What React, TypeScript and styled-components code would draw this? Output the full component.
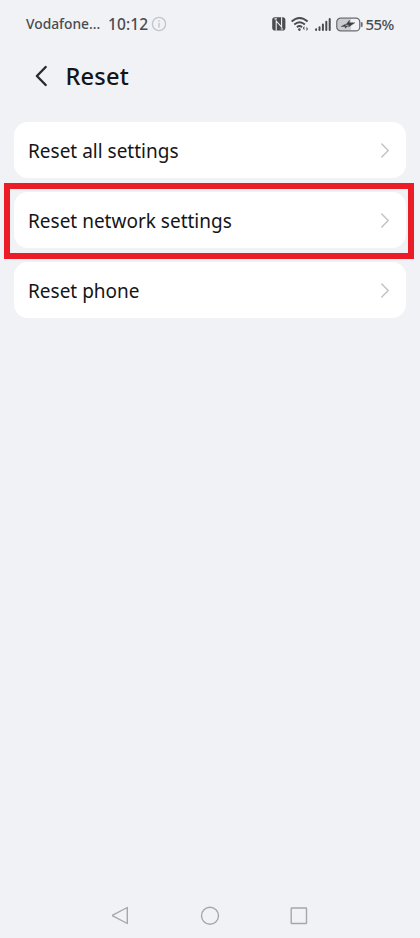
import React from "react";
import styled, { createGlobalStyle } from "styled-components";

const GlobalStyle = createGlobalStyle`
  html, body { margin: 0; padding: 0; background: #f1f2f6; }
  * { box-sizing: border-box; }
  svg { display: block; flex: none; }
`;

const Screen = styled.div`
  display: flex;
  flex-direction: column;
  width: 420px;
  height: 938px;
  background: #f1f2f6;
  color: #151517;
  font-family: "Noto Sans", "Open Sans", sans-serif;
  overflow: hidden;
`;

const StatusBar = styled.header`
  display: flex;
  align-items: center;
  justify-content: space-between;
  height: 48px;
  padding: 0 26px;
  color: #4a4b4f;
`;

const StatusGroup = styled.div`
  display: flex;
  align-items: center;
`;

const StatusText = styled.span<{ $size: number; $width: number; $spacing?: number; $gap?: number }>`
  width: ${(p) => p.$width}px;
  margin-right: ${(p) => p.$gap ?? 0}px;
  font-size: ${(p) => p.$size}px;
  font-weight: 500;
  line-height: 20px;
  letter-spacing: ${(p) => p.$spacing ?? 0}px;
  white-space: nowrap;
`;

const StatusIcons = styled.div`
  display: flex;
  align-items: center;
  gap: 4.5px;
  margin-right: 3px;
`;

const TitleBar = styled.div`
  display: flex;
  align-items: center;
  height: 56px;
  padding-left: 34px;
  gap: 15.5px;
`;

const Title = styled.h1`
  margin: 0;
  font-size: 23.6px;
  font-weight: 500;
  line-height: 32px;
  letter-spacing: 0.2px;
`;

const List = styled.main`
  display: flex;
  flex-direction: column;
  flex: 1;
  gap: 14px;
  padding: 18.4px 14px 0;
`;

const Row = styled.div`
  position: relative;
  display: flex;
  align-items: center;
  justify-content: space-between;
  height: 56px;
  padding: 0 16px 0 14px;
  border-radius: 14px;
  background: #fff;
`;

const RowLabel = styled.span`
  font-size: 19px;
  line-height: 26px;
  padding-top: 1px;
  white-space: nowrap;
`;

const Highlight = styled.div`
  position: absolute;
  inset: -9.4px -7.5px -10.4px -9.6px;
  border: 6px solid #ec1c26;
`;

const NavBar = styled.nav`
  display: flex;
  align-items: center;
  justify-content: space-between;
  height: 45px;
  padding: 0 111px 0 110px;
`;

const rows = [
  { label: "Reset all settings" },
  { label: "Reset network settings", highlighted: true },
  { label: "Reset phone" },
];

const InfoIcon = () => (
  <svg width="16" height="16" viewBox="0 0 16 16" fill="none" stroke="#c3c4c8" strokeWidth="1.3">
    <circle cx="8" cy="8" r="6.6" />
    <path d="M8 7v4.5M8 4.2v1.5" strokeWidth="1.4" />
  </svg>
);

const NfcIcon = () => (
  <svg width="14" height="14" viewBox="0 0 14 14" fill="none">
    <rect x="0.2" y="0.2" width="13.2" height="13.4" rx="2.8" fill="#4a4b4f" />
    <path d="M4.2 13.6V4L9.6 10V0.2M2.5 1.9h2.4M8.7 12h2.4" stroke="#f1f2f6" strokeWidth="1.1" />
  </svg>
);

const WifiIcon = () => (
  <svg width="20" height="16" viewBox="0 0 20 16" fill="none" stroke="#4a4b4f" strokeWidth="1.9">
    <path d="M.6 5.5Q8.6-1.7 16.6 5.5M3.3 8.5Q8.6 4 13.9 8.5M5.9 11.2Q8.6 9 11 11.2" />
    <circle cx="8.4" cy="13.6" r="1.3" fill="#4a4b4f" stroke="none" />
    <path d="m11.7 12.1 1.7-2v4.4ZM17.1 13.1l-1.7 2v-4.4Z" fill="#55565a" stroke="none" />
  </svg>
);

const SignalIcon = () => (
  <svg width="16" height="15" viewBox="0 0 16 15" stroke="#4a4b4f" strokeWidth="2" strokeLinecap="round">
    <path d="M1.1 12.3v.8M4.5 10.3v2.8M7.9 7.6v5.5M11.3 4.7v8.4M14.7 1.9v11.2" />
  </svg>
);

const BatteryIcon = () => (
  <svg width="27" height="15" viewBox="0 0 27 15" fill="none">
    <path d="M4.5 2H15v11H4.5Q1.5 13 1.5 10V5Q1.5 2 4.5 2Z" fill="#cbccd0" />
    <rect x="0.8" y="1.1" width="23" height="12.8" rx="4" stroke="#68696d" strokeWidth="1.3" />
    <path d="M25.8 5.3v4.4" stroke="#68696d" strokeWidth="1.6" />
    <path d="M13.4 3.2v2.6h5.4l-6.2 4.1V7.7H9.9ZM9.4 7.2v1.7h2.4l-2.6 2.4V9.5H5.1Z" fill="#3f4044" stroke="#3f4044" strokeWidth="0.4" />
  </svg>
);

const BackIcon = () => (
  <svg width="16" height="24" viewBox="0 0 16 24" fill="none" stroke="#29292e" strokeWidth="2.4" strokeLinecap="round" strokeLinejoin="round">
    <path d="m11.7 3-8.8 9 8.8 9" />
  </svg>
);

const Chevron = () => (
  <svg width="10" height="16" viewBox="0 0 10 16" fill="none" stroke="#c5c5c8" strokeWidth="1.6" strokeLinecap="round" strokeLinejoin="round">
    <path d="m1.8 2 6.4 6.5-6.4 6.5" />
  </svg>
);

export default function App() {
  return (
    <Screen>
      <GlobalStyle />
      <StatusBar>
        <StatusGroup>
          <StatusText $size={13.8} $width={74} $gap={8}>Vodafone...</StatusText>
          <StatusText $size={15.5} $width={43} $spacing={0.1}>10:12</StatusText>
          <InfoIcon />
        </StatusGroup>
        <StatusGroup>
          <StatusIcons>
            <NfcIcon />
            <WifiIcon />
            <SignalIcon />
            <BatteryIcon />
          </StatusIcons>
          <StatusText $size={15} $width={28.5} $spacing={-0.6}>55%</StatusText>
        </StatusGroup>
      </StatusBar>
      <TitleBar>
        <BackIcon />
        <Title>Reset</Title>
      </TitleBar>
      <List>
        {rows.map((row) => (
          <Row key={row.label}>
            <RowLabel>{row.label}</RowLabel>
            <Chevron />
            {row.highlighted && <Highlight />}
          </Row>
        ))}
      </List>
      <NavBar>
        <svg width="20" height="22" viewBox="0 0 20 22" fill="none" stroke="#a6a7ab" strokeWidth="1.4" strokeLinejoin="round">
          <path d="M17.3 2.5v16L2.7 10.8v-.7Z" />
        </svg>
        <svg width="20" height="20" viewBox="0 0 20 20" fill="none" stroke="#a6a7ab" strokeWidth="1.4">
          <circle cx="10" cy="9.7" r="8.5" />
        </svg>
        <svg width="20" height="20" viewBox="0 0 20 20" fill="none" stroke="#a6a7ab" strokeWidth="1.4">
          <rect x="2.2" y="2" width="15.3" height="15.5" rx="0.5" />
        </svg>
      </NavBar>
    </Screen>
  );
}
